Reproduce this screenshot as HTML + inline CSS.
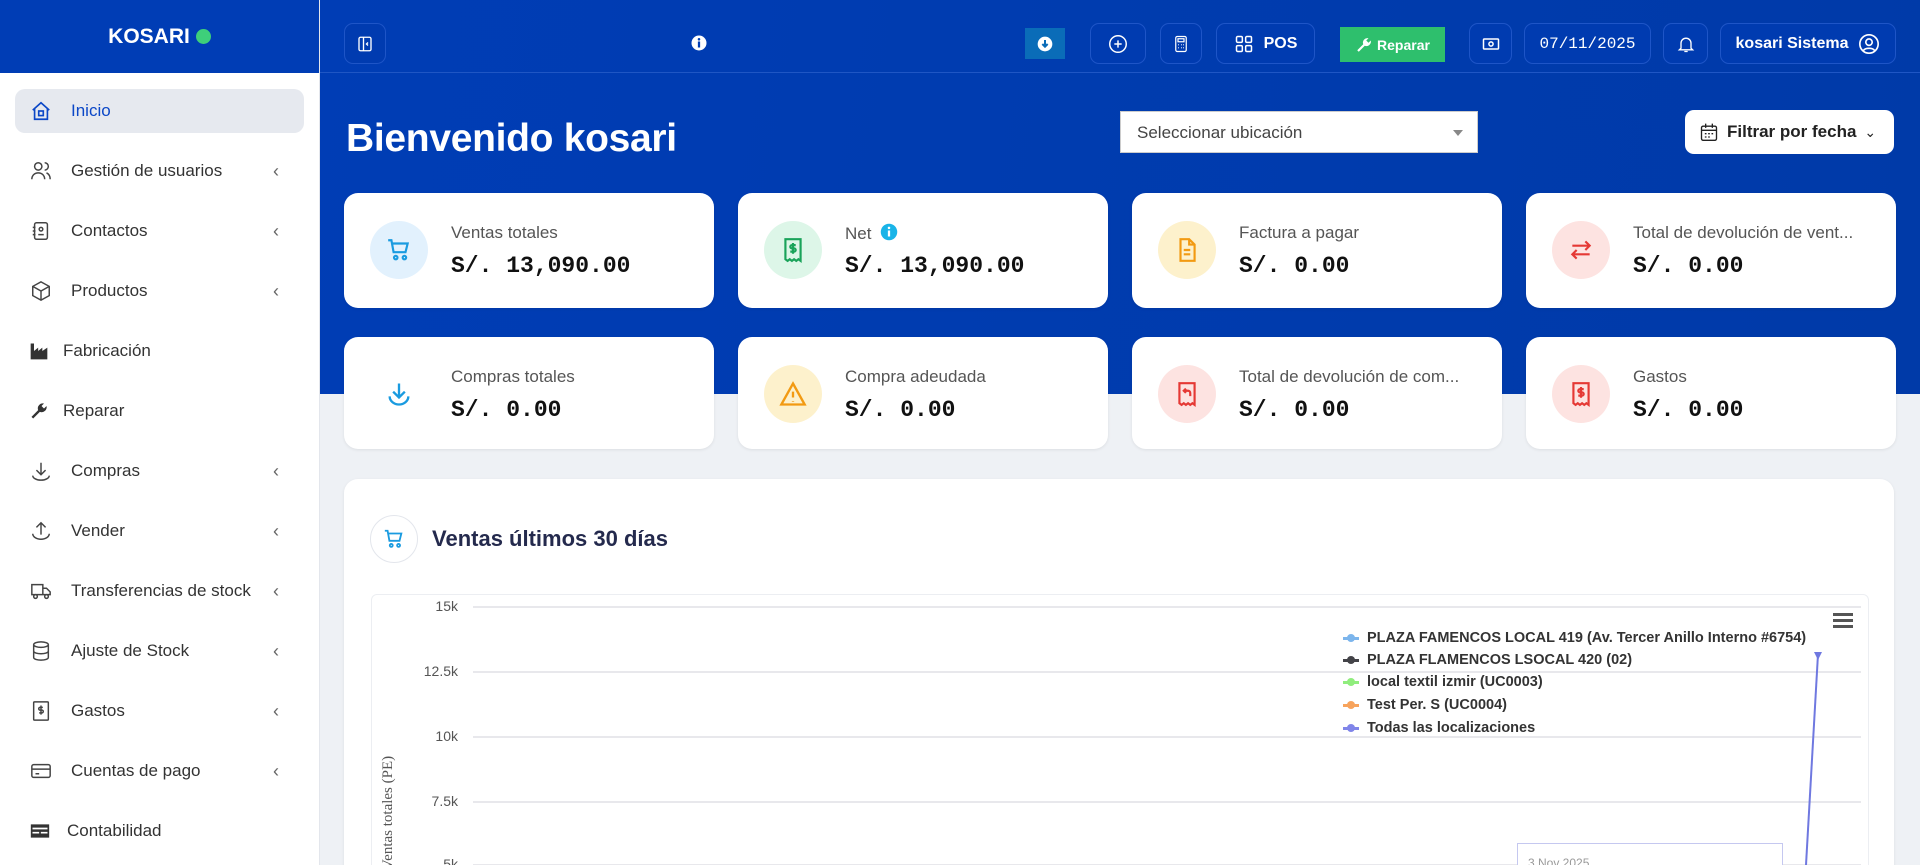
<!DOCTYPE html>
<html><head><meta charset="utf-8"><style>
*{box-sizing:border-box;margin:0;padding:0}
html,body{width:1920px;height:865px;overflow:hidden}
body{background:#eef1f5;font-family:"Liberation Sans",sans-serif}
#w{position:relative;width:1920px;height:865px;overflow:hidden}
.side{position:absolute;left:0;top:0;width:320px;height:865px;background:#fff;border-right:1px solid #e3e6ec}
.logo{height:73px;background:#003db5;color:#fff;font-weight:bold;font-size:21px;display:flex;align-items:center;justify-content:center;gap:6px}
.logo i{width:15px;height:15px;border-radius:50%;background:#3ecf7a;display:inline-block}
.item{position:absolute;left:15px;width:289px;height:44px;display:flex;align-items:center;font-size:17px;color:#333}
.item svg{position:absolute;left:15px}
.item span{position:absolute;left:56px}
.item .ch{position:absolute;left:258px;color:#666;font-size:18px}
.item.act{background:#e6e9ef;border-radius:10px;color:#0b47c7}
.blue{position:absolute;left:320px;top:0;width:1600px;height:394px;background:linear-gradient(100deg,#003db5,#003aa8)}
.hdr{position:absolute;left:320px;top:0;width:1600px;height:73px;border-bottom:1px solid #1f56c4}
.hb{position:absolute;top:23px;height:41px;border:1px solid #1e55c7;border-radius:9px;background:#003bb0;color:#fff;display:flex;align-items:center;justify-content:center;gap:10px;font-size:16px;font-weight:bold}
h1{position:absolute;left:346px;top:117px;color:#fff;font-size:39px;font-weight:bold;letter-spacing:-0.3px}
.sel{position:absolute;left:1120px;top:111px;width:358px;height:42px;background:#fff;border:1px solid #ccc;font-size:17px;color:#444;padding:11px 16px}
.sel:after{content:"";position:absolute;right:14px;top:18px;border:5px solid transparent;border-top:6px solid #888}
.flt{position:absolute;left:1685px;top:110px;width:209px;height:44px;background:#fff;border-radius:9px;font-size:17px;font-weight:bold;color:#222;display:flex;align-items:center;gap:8px;padding-left:14px}
.card{position:absolute;width:370px;height:115px;background:#fff;border-radius:14px;box-shadow:0 1px 3px rgba(0,0,0,.08)}
.card .ic{position:absolute;left:26px;top:28px;width:58px;height:58px;border-radius:50%;display:flex;align-items:center;justify-content:center}
.card .l{position:absolute;left:107px;top:30px;font-size:17px;color:#555;white-space:nowrap}
.card .v{position:absolute;left:107px;top:60px;font-family:"Liberation Mono",monospace;font-weight:bold;font-size:23px;color:#111}
.chart{position:absolute;left:344px;top:479px;width:1550px;height:400px;background:#fff;border-radius:14px;box-shadow:0 1px 3px rgba(0,0,0,.08)}
.gl{position:absolute;left:473px;width:1388px;height:2px;background:#e8e8ec}
.yl{position:absolute;left:400px;width:58px;text-align:right;font-size:14px;color:#555}
.lg{position:absolute;left:1343px;font-size:14.5px;font-weight:bold;color:#333;display:flex;align-items:center;gap:8px;white-space:nowrap}
.lg b{display:inline-block;width:16px;height:3px;position:relative}
.lg b:after{content:"";position:absolute;left:4px;top:-3px;width:8px;height:8px;border-radius:50%;background:inherit}
</style></head><body><div id="w">
<div class="blue"></div>
<div class="side">
<div class="logo">KOSARI <i></i></div>
<div class="item act" style="top:89px"><svg width="22" height="22" viewBox="0 0 24 24" fill="none" stroke="#0b47c7" stroke-width="1.8"><path d="M3 11l9-8 9 8M5 9v12h14V9"/><rect x="9.5" y="12" width="5" height="5"/></svg><span>Inicio</span></div>
<div class="item" style="top:149px"><svg width="22" height="22" viewBox="0 0 24 24" fill="none" stroke="#444" stroke-width="1.6"><circle cx="9" cy="7" r="4"/><path d="M2 21c0-4 3-7 7-7s7 3 7 7M16 3a4 4 0 010 8M18 14c2 1 4 3 4 7"/></svg><span>Gestión de usuarios</span><span class="ch">‹</span></div>
<div class="item" style="top:209px"><svg width="22" height="22" viewBox="0 0 24 24" fill="none" stroke="#444" stroke-width="1.6"><rect x="5" y="3" width="14" height="18" rx="2"/><circle cx="12" cy="10" r="2"/><path d="M9 16h6M3 8h3M3 12h3M3 16h3"/></svg><span>Contactos</span><span class="ch">‹</span></div>
<div class="item" style="top:269px"><svg width="22" height="22" viewBox="0 0 24 24" fill="none" stroke="#444" stroke-width="1.6"><path d="M12 2l9 5v10l-9 5-9-5V7zM3 7l9 5 9-5M12 12v10"/></svg><span>Productos</span><span class="ch">‹</span></div>
<div class="item" style="top:329px"><svg style="left:14px" width="20" height="20" viewBox="0 0 24 24" fill="#333"><path d="M2 22V3h4v9l5-4v4l5-4v4l6-4v14z"/></svg><span style="left:48px">Fabricación</span></div>
<div class="item" style="top:389px"><svg style="left:14px" width="20" height="20" viewBox="0 0 24 24" fill="#333"><path d="M21 6l-3 3-3-3 3-3a6 6 0 00-7 8L3 19l2 2 8-8a6 6 0 008-7z"/></svg><span style="left:48px">Reparar</span></div>
<div class="item" style="top:449px"><svg width="22" height="22" viewBox="0 0 24 24" fill="none" stroke="#444" stroke-width="1.6"><path d="M12 3v13M7 11l5 5 5-5M3 17a9 5 0 0018 0"/></svg><span>Compras</span><span class="ch">‹</span></div>
<div class="item" style="top:509px"><svg width="22" height="22" viewBox="0 0 24 24" fill="none" stroke="#444" stroke-width="1.6"><path d="M12 16V3M7 8l5-5 5 5M3 15a9 6 0 0018 0"/></svg><span>Vender</span><span class="ch">‹</span></div>
<div class="item" style="top:569px"><svg width="22" height="22" viewBox="0 0 24 24" fill="none" stroke="#444" stroke-width="1.6"><path d="M2 5h12v11H2zM14 9h4l4 4v3h-8"/><circle cx="6" cy="18" r="2"/><circle cx="18" cy="18" r="2"/></svg><span>Transferencias de stock</span><span class="ch">‹</span></div>
<div class="item" style="top:629px"><svg width="22" height="22" viewBox="0 0 24 24" fill="none" stroke="#444" stroke-width="1.6"><ellipse cx="12" cy="5" rx="8" ry="3"/><path d="M4 5v14c0 2 4 3 8 3s8-1 8-3V5M4 12c0 2 4 3 8 3s8-1 8-3"/></svg><span>Ajuste de Stock</span><span class="ch">‹</span></div>
<div class="item" style="top:689px"><svg width="22" height="22" viewBox="0 0 24 24" fill="none" stroke="#444" stroke-width="1.6"><rect x="4" y="2" width="16" height="20" rx="1"/><path d="M14 8h-3a1.5 1.5 0 000 3h2a1.5 1.5 0 010 3h-3M12 6v10"/></svg><span>Gastos</span><span class="ch">‹</span></div>
<div class="item" style="top:749px"><svg width="22" height="22" viewBox="0 0 24 24" fill="none" stroke="#444" stroke-width="1.6"><rect x="2" y="5" width="20" height="14" rx="2"/><path d="M2 10h20M6 15h4"/></svg><span>Cuentas de pago</span><span class="ch">‹</span></div>
<div class="item" style="top:809px"><svg style="left:14px" width="22" height="20" viewBox="0 0 24 24" fill="#333"><path d="M1 4h22v16H1zM3 8h18v2H3zM3 13h8v2H3zM13 13h8v2h-8z" fill-rule="evenodd"/></svg><span style="left:52px">Contabilidad</span></div>
</div>
<div class="hdr"></div>
<div class="hb" style="left:344px;width:42px"><svg width="18" height="20" viewBox="0 0 24 24" fill="none" stroke="#fff" stroke-width="1.8"><rect x="4" y="3" width="16" height="18" rx="2"/><path d="M10 3v18M16 10l-2 2 2 2"/></svg></div>
<svg style="position:absolute;left:690px;top:34px" width="18" height="18" viewBox="0 0 24 24"><circle cx="12" cy="12" r="10" fill="#fff"/><rect x="10.5" y="10" width="3" height="8" fill="#003db5"/><circle cx="12" cy="7" r="1.7" fill="#003db5"/></svg>
<div style="position:absolute;left:1025px;top:28px;width:40px;height:31px;background:#0a6cb8;display:flex;align-items:center;justify-content:center"><svg width="16" height="16" viewBox="0 0 24 24"><circle cx="12" cy="12" r="11" fill="#fff"/><path d="M12 6v10M8 12l4 4 4-4" stroke="#0a6cb8" stroke-width="3" fill="none"/></svg></div>
<div class="hb" style="left:1090px;width:56px"><svg width="22" height="22" viewBox="0 0 24 24" fill="none" stroke="#fff" stroke-width="1.6"><circle cx="12" cy="12" r="9"/><path d="M12 8v8M8 12h8"/></svg></div>
<div class="hb" style="left:1160px;width:42px"><svg width="18" height="22" viewBox="0 0 24 24" fill="none" stroke="#fff" stroke-width="1.6"><rect x="5" y="2" width="14" height="20" rx="2"/><rect x="8" y="5" width="8" height="4"/><path d="M8 13h1M12 13h1M15 13h1M8 17h1M12 17h1M15 17h1"/></svg></div>
<div class="hb" style="left:1216px;width:99px"><svg width="20" height="20" viewBox="0 0 24 24" fill="none" stroke="#fff" stroke-width="1.8"><rect x="3" y="3" width="7" height="7" rx="1.5"/><rect x="14" y="3" width="7" height="7" rx="1.5"/><rect x="3" y="14" width="7" height="7" rx="1.5"/><rect x="14" y="14" width="7" height="7" rx="1.5"/></svg>POS</div>
<div style="position:absolute;left:1340px;top:27px;width:105px;height:35px;background:#2ebf6d;color:#fff;font-weight:bold;font-size:14px;display:flex;align-items:center;justify-content:center;gap:4px"><svg width="18" height="18" viewBox="0 0 24 24" fill="#fff"><path d="M21 6l-3 3-3-3 3-3a6 6 0 00-7 8L3 19l2 2 8-8a6 6 0 008-7z"/></svg>Reparar</div>
<div class="hb" style="left:1469px;width:43px"><svg width="22" height="20" viewBox="0 0 24 24" fill="none" stroke="#fff" stroke-width="1.8"><rect x="3" y="6" width="18" height="12" rx="1"/><circle cx="12" cy="12" r="2.5"/></svg></div>
<div class="hb" style="left:1524px;width:127px;font-family:'Liberation Mono',monospace;font-weight:normal;font-size:16px">07/11/2025</div>
<div class="hb" style="left:1663px;width:45px"><svg width="20" height="22" viewBox="0 0 24 24" fill="none" stroke="#fff" stroke-width="1.6"><path d="M6 17V11a6 6 0 0112 0v6l2 2H4zM10 21h4"/></svg></div>
<div class="hb" style="left:1720px;width:176px">kosari Sistema <svg width="22" height="22" viewBox="0 0 24 24" fill="none" stroke="#fff" stroke-width="1.8"><circle cx="12" cy="12" r="10"/><circle cx="12" cy="10" r="3.5"/><path d="M6 19c2-3 10-3 12 0"/></svg></div>
<h1>Bienvenido kosari</h1>
<div class="sel">Seleccionar ubicación</div>
<div class="flt"><svg width="20" height="22" viewBox="0 0 24 24" fill="none" stroke="#222" stroke-width="1.6"><rect x="3" y="5" width="18" height="17" rx="2"/><path d="M3 10h18M8 2v5M16 2v5M7 14h2M11 14h2M15 14h2M7 18h2M11 18h2"/></svg>Filtrar por fecha <span style="font-weight:normal;font-size:14px">⌄</span></div>

<div class="card" style="left:344px;top:193px"><div class="ic" style="background:#e2f1fd"><svg width="26" height="26" viewBox="0 0 24 24" fill="none" stroke="#1a9be0" stroke-width="2"><path d="M2 3h3l2 11h11l2-8H6"/><circle cx="9" cy="19" r="1.6"/><circle cx="17" cy="19" r="1.6"/></svg></div><div class="l">Ventas totales</div><div class="v">S/. 13,090.00</div></div>
<div class="card" style="left:738px;top:193px"><div class="ic" style="background:#ddf6e8"><svg width="26" height="26" viewBox="0 0 24 24" fill="none" stroke="#1aa35a" stroke-width="2"><path d="M5 2h14v20l-2-1.5-2 1.5-2-1.5-2 1.5-2-1.5-2 1.5-2-1.5z"/><path d="M14.5 7.5h-3.5a1.5 1.5 0 000 3h2a1.5 1.5 0 010 3h-3.5M12 5.5v10"/></svg></div><div class="l">Net <svg width="18" height="18" viewBox="0 0 24 24" style="vertical-align:-2px;margin-left:4px"><circle cx="12" cy="12" r="11" fill="#19b4e8"/><rect x="10.5" y="10" width="3" height="8" fill="#fff"/><circle cx="12" cy="6.5" r="1.7" fill="#fff"/></svg></div><div class="v">S/. 13,090.00</div></div>
<div class="card" style="left:1132px;top:193px"><div class="ic" style="background:#fdf1cc"><svg width="26" height="26" viewBox="0 0 24 24" fill="none" stroke="#f29a12" stroke-width="2"><path d="M6 2h8l5 5v15H6zM14 2v5h5M9 12h6M9 16h6"/></svg></div><div class="l">Factura a pagar</div><div class="v">S/. 0.00</div></div>
<div class="card" style="left:1526px;top:193px"><div class="ic" style="background:#fde3e1"><svg width="28" height="26" viewBox="0 0 24 24" fill="none" stroke="#e53935" stroke-width="2"><path d="M4 8h16M16 4l4 4-4 4M20 16H4M8 12l-4 4 4 4"/></svg></div><div class="l">Total de devolución de vent...</div><div class="v">S/. 0.00</div></div>
<div class="card" style="left:344px;top:337px;height:112px"><div class="ic"><svg width="28" height="28" viewBox="0 0 24 24" fill="none" stroke="#1a9be0" stroke-width="2"><path d="M12 3v12M7 10l5 5 5-5M4 14a8 7 0 0016 0"/></svg></div><div class="l">Compras totales</div><div class="v">S/. 0.00</div></div>
<div class="card" style="left:738px;top:337px;height:112px"><div class="ic" style="background:#fdf1cc"><svg width="28" height="28" viewBox="0 0 24 24" fill="none" stroke="#f29a12" stroke-width="2"><path d="M12 3l10 18H2zM12 10v5M12 18v.5"/></svg></div><div class="l">Compra adeudada</div><div class="v">S/. 0.00</div></div>
<div class="card" style="left:1132px;top:337px;height:112px"><div class="ic" style="background:#fde3e1"><svg width="26" height="26" viewBox="0 0 24 24" fill="none" stroke="#e53935" stroke-width="2"><path d="M5 2h14v20l-2-1.5-2 1.5-2-1.5-2 1.5-2-1.5-2 1.5-2-1.5z"/><path d="M11 7l-2 2 2 2M9 9h4a2 2 0 012 2v3"/></svg></div><div class="l">Total de devolución de com...</div><div class="v">S/. 0.00</div></div>
<div class="card" style="left:1526px;top:337px;height:112px"><div class="ic" style="background:#fde3e1"><svg width="26" height="26" viewBox="0 0 24 24" fill="none" stroke="#e53935" stroke-width="2"><path d="M5 2h14v20l-2-1.5-2 1.5-2-1.5-2 1.5-2-1.5-2 1.5-2-1.5z"/><path d="M14.5 7.5h-3.5a1.5 1.5 0 000 3h2a1.5 1.5 0 010 3h-3.5M12 5.5v10"/></svg></div><div class="l">Gastos</div><div class="v">S/. 0.00</div></div>

<div class="chart"></div>
<div style="position:absolute;left:370px;top:515px;width:48px;height:48px;border-radius:50%;border:1px solid #e3e6ec;display:flex;align-items:center;justify-content:center"><svg width="22" height="22" viewBox="0 0 24 24" fill="none" stroke="#1a9be0" stroke-width="2"><path d="M2 3h3l2 11h11l2-8H6"/><circle cx="9" cy="19" r="1.6"/><circle cx="17" cy="19" r="1.6"/></svg></div>
<div style="position:absolute;left:432px;top:526px;font-size:22px;font-weight:bold;color:#242a4d">Ventas últimos 30 días</div>
<div style="position:absolute;left:371px;top:594px;width:1498px;height:290px;border:1px solid #eceef2;border-radius:6px"></div>
<div class="gl" style="top:606px"></div><div class="gl" style="top:671px"></div><div class="gl" style="top:736px"></div><div class="gl" style="top:801px"></div><div class="gl" style="top:864px"></div>
<div class="yl" style="top:598px">15k</div><div class="yl" style="top:663px">12.5k</div><div class="yl" style="top:728px">10k</div><div class="yl" style="top:793px">7.5k</div><div class="yl" style="top:856px">5k</div>
<div style="position:absolute;left:380px;top:870px;transform:rotate(-90deg);transform-origin:0 0;font-family:'Liberation Serif',serif;font-size:15px;color:#555;white-space:nowrap">Ventas totales (PE)</div>
<div style="position:absolute;left:1833px;top:613px;width:20px"><div style="height:3px;background:#555;margin-bottom:3px"></div><div style="height:3px;background:#555;margin-bottom:3px"></div><div style="height:3px;background:#555"></div></div>
<div class="lg" style="top:630px"><b style="background:#7cb5ec"></b>PLAZA FAMENCOS LOCAL 419 (Av. Tercer Anillo Interno #6754)</div>
<div class="lg" style="top:652px"><b style="background:#434348"></b>PLAZA FLAMENCOS LSOCAL 420 (02)</div>
<div class="lg" style="top:674px"><b style="background:#90ed7d"></b>local textil izmir (UC0003)</div>
<div class="lg" style="top:697px"><b style="background:#f7a35c"></b>Test Per. S (UC0004)</div>
<div class="lg" style="top:720px"><b style="background:#8085e9"></b>Todas las localizaciones</div>
<svg style="position:absolute;left:1780px;top:640px" width="50" height="225"><path d="M38 14 L26 225" stroke="#6f78e0" stroke-width="2" fill="none"/><path d="M34 12h8l-4 8z" fill="#6f78e0"/></svg>
<div style="position:absolute;left:1517px;top:843px;width:266px;height:40px;border:1px solid #c5c8f0;background:#fff;font-size:12px;color:#999;padding:12px 10px">3 Nov 2025</div>
</div></body></html>
